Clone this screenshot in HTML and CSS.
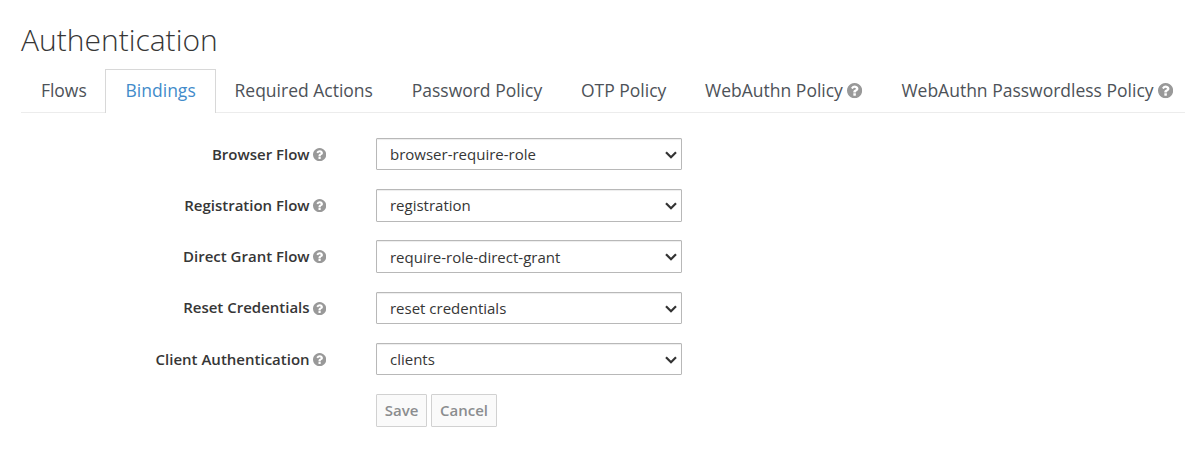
FILE: index.html
```
<!DOCTYPE html>
<html lang="en">
<head>
<meta charset="utf-8">
<title>Authentication</title>
<link rel="stylesheet" href="styles.css">
</head>
<body>
<svg class="defs" aria-hidden="true">
  <symbol id="help" viewBox="0 0 1536 1536"><path d="M896 1248v-192q0-14-9-23t-23-9h-192q-14 0-23 9t-9 23v192q0 14 9 23t23 9h192q14 0 23-9t9-23zm256-672q0-88-55.500-163t-138.500-116-170-41q-243 0-371 213-15 24 8 42l132 100q7 6 19 6 16 0 25-12 53-68 86-92 34-24 86-24 48 0 85.500 26t37.500 59q0 38-20 61t-68 45q-63 28-115.500 86.500t-52.500 125.500v36q0 14 9 23t23 9h192q14 0 23-9t9-23q0-19 21.500-49.500t54.500-49.500q32-18 49-28.500t46-35 44.500-48 28-60.500 12.500-81zm384 192q0 209-103 385.500t-279.500 279.500-385.500 103-385.500-103-279.500-279.500-103-385.500 103-385.500 279.500-279.500 385.500-103 385.500 103 279.500 279.500 103 385.500z"/></symbol>
  <symbol id="chevron" viewBox="0 0 14 10"><path d="M2 2.200 7 7.200 12 2.200" fill="none" stroke="#333" stroke-width="2.200"/></symbol>
</svg>
<main class="page">
  <h1 class="title">Authentication</h1>
  <nav class="tabs">
    <a class="tab">Flows</a>
    <a class="tab active">Bindings</a>
    <a class="tab">Required Actions</a>
    <a class="tab">Password Policy</a>
    <a class="tab">OTP Policy</a>
    <a class="tab">WebAuthn Policy <svg class="help"><use href="#help"/></svg></a>
    <a class="tab">WebAuthn Passwordless Policy <svg class="help"><use href="#help"/></svg></a>
  </nav>
  <form class="form">
    <div class="row">
      <label class="label" for="browser">Browser Flow <svg class="help"><use href="#help"/></svg></label>
      <div class="field"><select id="browser" class="select"><option>browser-require-role</option></select><svg class="chevron"><use href="#chevron"/></svg></div>
    </div>
    <div class="row">
      <label class="label" for="registration">Registration Flow <svg class="help"><use href="#help"/></svg></label>
      <div class="field"><select id="registration" class="select"><option>registration</option></select><svg class="chevron"><use href="#chevron"/></svg></div>
    </div>
    <div class="row">
      <label class="label" for="grant">Direct Grant Flow <svg class="help"><use href="#help"/></svg></label>
      <div class="field"><select id="grant" class="select"><option>require-role-direct-grant</option></select><svg class="chevron"><use href="#chevron"/></svg></div>
    </div>
    <div class="row">
      <label class="label" for="reset">Reset Credentials <svg class="help"><use href="#help"/></svg></label>
      <div class="field"><select id="reset" class="select"><option>reset credentials</option></select><svg class="chevron"><use href="#chevron"/></svg></div>
    </div>
    <div class="row">
      <label class="label" for="client">Client Authentication <svg class="help"><use href="#help"/></svg></label>
      <div class="field"><select id="client" class="select"><option>clients</option></select><svg class="chevron"><use href="#chevron"/></svg></div>
    </div>
    <div class="actions">
      <button class="button" disabled>Save</button>
      <button class="button" disabled>Cancel</button>
    </div>
  </form>
</main>
</body>
</html>
```
FILE: styles.css
```
* { box-sizing: border-box; }
body {
  margin: 0;
  background: #fff;
  color: #363636;
  font: 15px/25px "Open Sans", sans-serif;
  overflow: hidden;
}
.defs { display: none; }
.page { padding: 23px 0 0 21px; }
.title {
  margin: 0 0 13px;
  font-size: 30px;
  font-weight: 300;
  line-height: 33px;
}
.tabs {
  display: flex;
  height: 44px;
  border-bottom: 1px solid #ececec;
}
.tab {
  flex: none;
  height: 44px;
  padding: 8px 18.400px 0;
  border: 1px solid transparent;
  border-bottom: 0;
  color: #4d5258;
  font-size: 17.500px;
  line-height: 25px;
  white-space: nowrap;
}
.tab:first-child { padding-left: 18.900px; }
.tab.active {
  margin: 0 -1px;
  padding: 8px 19.400px 0;
  border-color: #d8d8d8;
  background: #fff;
  color: #428bca;
}
.help {
  width: 13.200px;
  height: 13.200px;
  margin-left: -.4px;
  fill: #999;
  vertical-align: -1.500px;
}
.tab .help { width: 15.200px; height: 15.200px; margin-left: 0; vertical-align: -1.500px; }
.form {
  display: flex;
  flex-direction: column;
  gap: 18.750px;
  padding-top: 24.750px;
}
.row { display: flex; height: 32.500px; }
.label {
  width: 305.300px;
  padding-top: 3.800px;
  font-weight: 600;
  text-align: right;
  white-space: nowrap;
}
.field {
  position: relative;
  width: 306px;
  margin-left: 49.700px;
}
.select {
  display: block;
  appearance: none;
  width: 100%;
  height: 32.500px;
  margin: 0;
  padding: 1px 13px 0;
  border: 1px solid #b8b8b8;
  border-radius: 1px;
  background: #fff;
  box-shadow: inset 0 1px 1px rgba(0, 0, 0, .075);
  color: #363636;
  font: inherit;
}
.chevron {
  position: absolute;
  top: 12px;
  right: 4px;
  width: 14px;
  height: 10px;
  pointer-events: none;
}
.actions {
  display: flex;
  gap: 4px;
  padding-left: 355px;
}
.button {
  height: 33px;
  padding: 0 7.800px;
  border: 1px solid #d1d1d1;
  border-radius: 1px;
  background: #fafafa;
  color: #8b8d8f;
  font: 600 15px/25px "Open Sans", sans-serif;
}
```
